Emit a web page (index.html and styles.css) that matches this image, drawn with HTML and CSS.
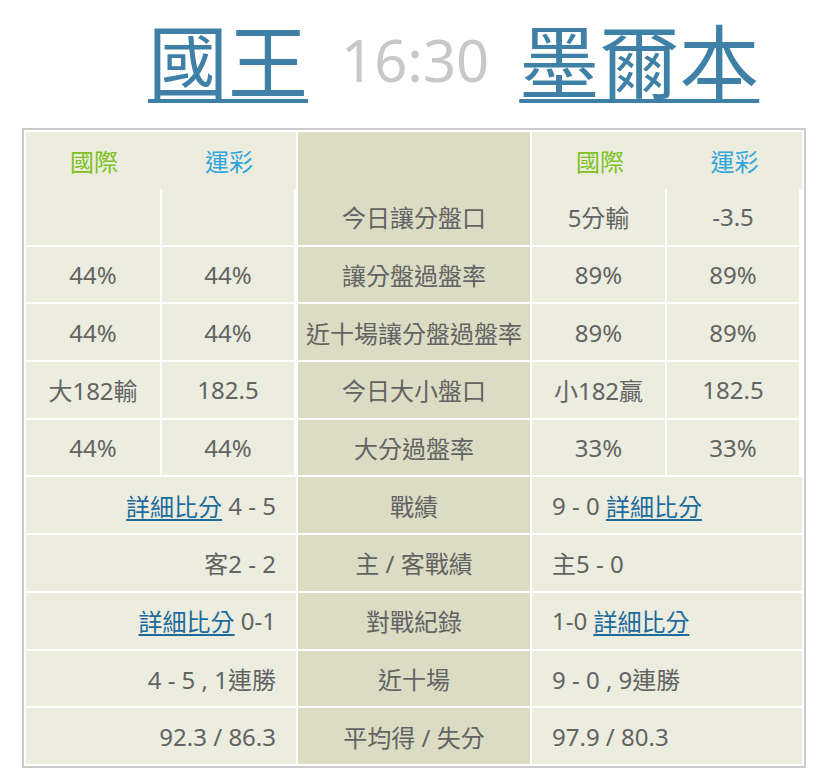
FILE: index.html
```html
<!DOCTYPE html>
<html lang="zh-Hant">
<head>
<meta charset="utf-8">
<title>國王 vs 墨爾本</title>
<link rel="stylesheet" href="styles.css">
</head>
<body>
<div class="title">
  <a class="team" href="#">國王</a>
  <span class="time">16:30</span>
  <a class="team" href="#">墨爾本</a>
</div>
<div class="board">
  <div class="grid">
    <div class="cell head head-left"><span class="intl">國際</span><span class="lottery">運彩</span></div>
    <div class="cell mid mid-top"><span class="mid-label">今日讓分盤口</span></div>
    <div class="cell head head-right"><span class="intl">國際</span><span class="lottery">運彩</span></div>

    <div class="cell"></div>
    <div class="cell c2"></div>
    <div class="cell">5分輸</div>
    <div class="cell c5">-3.5</div>

    <div class="cell">44%</div>
    <div class="cell c2">44%</div>
    <div class="cell mid">讓分盤過盤率</div>
    <div class="cell">89%</div>
    <div class="cell c5">89%</div>

    <div class="cell">44%</div>
    <div class="cell c2">44%</div>
    <div class="cell mid">近十場讓分盤過盤率</div>
    <div class="cell">89%</div>
    <div class="cell c5">89%</div>

    <div class="cell">大182輸</div>
    <div class="cell c2">182.5</div>
    <div class="cell mid">今日大小盤口</div>
    <div class="cell">小182贏</div>
    <div class="cell c5">182.5</div>

    <div class="cell">44%</div>
    <div class="cell c2">44%</div>
    <div class="cell mid">大分過盤率</div>
    <div class="cell">33%</div>
    <div class="cell c5">33%</div>

    <div class="cell wide left"><a class="link" href="#">詳細比分</a>&nbsp;4 - 5</div>
    <div class="cell mid">戰績</div>
    <div class="cell wide right">9 - 0&nbsp;<a class="link" href="#">詳細比分</a></div>

    <div class="cell wide left">客2 - 2</div>
    <div class="cell mid">主 / 客戰績</div>
    <div class="cell wide right">主5 - 0</div>

    <div class="cell wide left"><a class="link" href="#">詳細比分</a>&nbsp;0-1</div>
    <div class="cell mid">對戰紀錄</div>
    <div class="cell wide right">1-0&nbsp;<a class="link" href="#">詳細比分</a></div>

    <div class="cell wide left">4 - 5 , 1連勝</div>
    <div class="cell mid">近十場</div>
    <div class="cell wide right">9 - 0 , 9連勝</div>

    <div class="cell wide left">92.3 / 86.3</div>
    <div class="cell mid">平均得 / 失分</div>
    <div class="cell wide right">97.9 / 80.3</div>
  </div>
</div>
</body>
</html>
```
FILE: styles.css
```css
body {
  margin: 0;
  background: #ffffff;
  font-family: "Noto Sans", "Noto Sans CJK TC", sans-serif;
}

.title {
  display: flex;
  align-items: flex-start;
  height: 128px;
  box-sizing: border-box;
  padding-left: 148px;
}

.team {
  margin-top: 17px;
  font-family: "Noto Sans CJK TC", sans-serif;
  font-size: 80px;
  line-height: 80px;
  color: #3f80a6;
  text-decoration: underline;
  text-decoration-thickness: 4px;
  text-underline-offset: 7px;
  text-decoration-skip-ink: none;
}

.time {
  margin: 30px 30px 0 33px;
  font-family: "Noto Sans", sans-serif;
  font-size: 58px;
  line-height: 60px;
  color: #c8c8c8;
}

.board {
  margin-left: 22px;
  width: max-content;
  border: 2px solid #cccccc;
  padding: 2px;
  background: #ffffff;
}

.grid {
  display: grid;
  grid-template-columns: 134px 134px 232px 133px 135px;
  grid-template-rows: 55px repeat(10, 55.7px);
  gap: 2px;
  background: #ffffff;
}

.cell {
  display: flex;
  align-items: center;
  justify-content: center;
  background: #ecedde;
  color: #636363;
  font-size: 24px;
  white-space: nowrap;
}

.mid {
  background: #dcdcc5;
}

.c2 {
  margin-right: 2px;
}

.c5 {
  margin-right: 3px;
}

.head {
  grid-column: span 2;
  display: grid;
  margin-bottom: -2px;
  align-items: center;
  justify-items: center;
  column-gap: 2px;
}

.head-left {
  grid-template-columns: 134px 132px;
}

.head-right {
  grid-template-columns: 133px 132px;
}

.intl {
  color: #7cc11f;
}

.lottery {
  color: #31a5dd;
}

.mid-top {
  grid-row: span 2;
  flex-direction: column;
  justify-content: flex-end;
  align-items: stretch;
}

.mid-label {
  height: 55.7px;
  display: flex;
  align-items: center;
  justify-content: center;
}

.wide {
  grid-column: span 2;
}

.wide.left {
  justify-content: flex-end;
  padding-right: 20px;
}

.wide.right {
  justify-content: flex-start;
  padding-left: 20px;
}

.link {
  color: #1d6b9c;
  text-decoration: underline;
  text-decoration-thickness: 2px;
  text-underline-offset: 3px;
  text-decoration-skip-ink: none;
}
```
